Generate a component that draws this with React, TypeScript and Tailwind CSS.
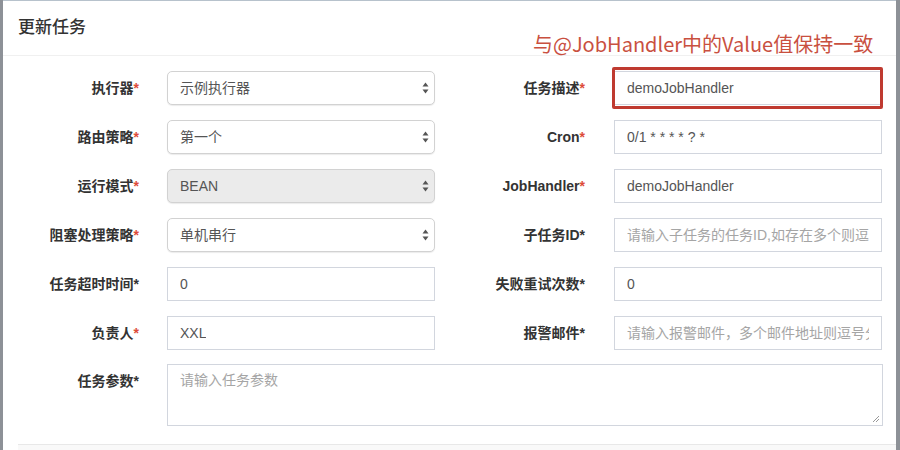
import React from "react";

const FONT = { fontFamily: '"Liberation Sans", "Noto Sans CJK SC", sans-serif' };

function Arrows() {
  return (
    <svg width="7" height="12" viewBox="0 0 7 12" className="shrink-0">
      <path d="M3.5 0.5 L6.5 4.5 L0.5 4.5 Z" fill="#555" />
      <path d="M3.5 11.5 L6.5 7.5 L0.5 7.5 Z" fill="#555" />
    </svg>
  );
}

function Label({ text, red = true, w }: { text: string; red?: boolean; w: string }) {
  return (
    <div className={`${w} shrink-0 text-right text-[14px] font-bold text-[#333] leading-[34px] whitespace-nowrap`}>
      {text}
      <span className={red ? "text-[#dd4b39]" : "text-[#333]"}>*</span>
    </div>
  );
}

function Select({ value, disabled = false }: { value: string; disabled?: boolean }) {
  return (
    <div
      className={`w-[268px] h-[34px] shrink-0 rounded-[5px] border border-[#d2d2d2] shadow-[0_1px_1px_rgba(0,0,0,0.08)] flex items-center justify-between pl-[12px] pr-[5px] text-[14px] text-[#555] ${
        disabled ? "bg-[#ebebeb]" : "bg-white"
      }`}
    >
      <span>{value}</span>
      <Arrows />
    </div>
  );
}

function Input({ value, placeholder = false }: { value: string; placeholder?: boolean }) {
  return (
    <div
      className={`w-[268px] h-[34px] shrink-0 border border-[#d2d6de] bg-white flex items-center px-[12px] text-[14px] overflow-hidden whitespace-nowrap ${
        placeholder ? "text-[#a5a5a5]" : "text-[#555]"
      }`}
    >
      <span className="block overflow-hidden">{value}</span>
    </div>
  );
}

function Row({ children }: { children: React.ReactNode }) {
  return <div className="flex items-center h-[34px]">{children}</div>;
}

export default function App() {
  return (
    <div className="w-[900px] h-[450px] overflow-hidden flex bg-[#8d9197]" style={FONT}>
      <div className="w-[3px] shrink-0 bg-[#8d9197]" />
      <div className="flex-1 bg-white flex flex-col relative border-t border-[#b7c2cc]">
        <div className="h-[55px] border-b border-[#f0f0f0] px-[15px] flex items-center">
          <span className="text-[17px] text-[#333] font-medium">更新任务</span>
        </div>
        <div className="flex flex-col gap-[15px] pt-[15px]">
          <Row>
            <Label text="执行器" w="w-[136px]" />
            <div className="w-[28px]" />
            <Select value="示例执行器" />
            <Label text="任务描述" w="w-[150px]" />
            <div className="w-[29px]" />
            <Input value="demoJobHandler" />
          </Row>
          <Row>
            <Label text="路由策略" w="w-[136px]" />
            <div className="w-[28px]" />
            <Select value="第一个" />
            <Label text="Cron" w="w-[150px]" />
            <div className="w-[29px]" />
            <Input value="0/1 * * * * ? *" />
          </Row>
          <Row>
            <Label text="运行模式" w="w-[136px]" />
            <div className="w-[28px]" />
            <Select value="BEAN" disabled />
            <Label text="JobHandler" w="w-[150px]" />
            <div className="w-[29px]" />
            <Input value="demoJobHandler" />
          </Row>
          <Row>
            <Label text="阻塞处理策略" w="w-[136px]" />
            <div className="w-[28px]" />
            <Select value="单机串行" />
            <Label text="子任务ID" red={false} w="w-[150px]" />
            <div className="w-[29px]" />
            <Input value="请输入子任务的任务ID,如存在多个则逗号分隔" placeholder />
          </Row>
          <Row>
            <Label text="任务超时时间" red={false} w="w-[136px]" />
            <div className="w-[28px]" />
            <Input value="0" />
            <Label text="失败重试次数" red={false} w="w-[150px]" />
            <div className="w-[29px]" />
            <Input value="0" />
          </Row>
          <Row>
            <Label text="负责人" w="w-[136px]" />
            <div className="w-[28px]" />
            <Input value="XXL" />
            <Label text="报警邮件" red={false} w="w-[150px]" />
            <div className="w-[29px]" />
            <Input value="请输入报警邮件，多个邮件地址则逗号分隔" placeholder />
          </Row>
          <div className="flex items-start -mt-[1px]">
            <Label text="任务参数" red={false} w="w-[136px]" />
            <div className="w-[28px]" />
            <div className="relative w-[716px] h-[62px] border border-[#d2d6de] bg-white px-[12px] pt-[5px] text-[14px] text-[#a5a5a5]">
              请输入任务参数
              <svg width="8" height="8" viewBox="0 0 8 8" className="absolute right-[2px] bottom-[2px]">
                <path d="M7 1 L1 7 M7 4 L4 7" stroke="#999" strokeWidth="1" />
              </svg>
            </div>
          </div>
        </div>
        <div className="mt-[18px] ml-[15px] flex-1 border-t border-[#e8e8e8] bg-[#f9f9f9]" />

        <div className="absolute left-[530px] top-[30px] text-[20px] leading-[26px] text-[#c9503f] whitespace-nowrap" style={{ fontFamily: '"Noto Sans CJK SC", "Noto Sans", sans-serif' }}>
          与@JobHandler中的Value值保持一致
        </div>
        <div className="absolute left-[609px] top-[66px] w-[271px] h-[42px] border-[3px] border-[#bf3a30] rounded-[2px]" />
      </div>
      <div className="w-[4px] shrink-0 bg-[#8d9197]" />
    </div>
  );
}
